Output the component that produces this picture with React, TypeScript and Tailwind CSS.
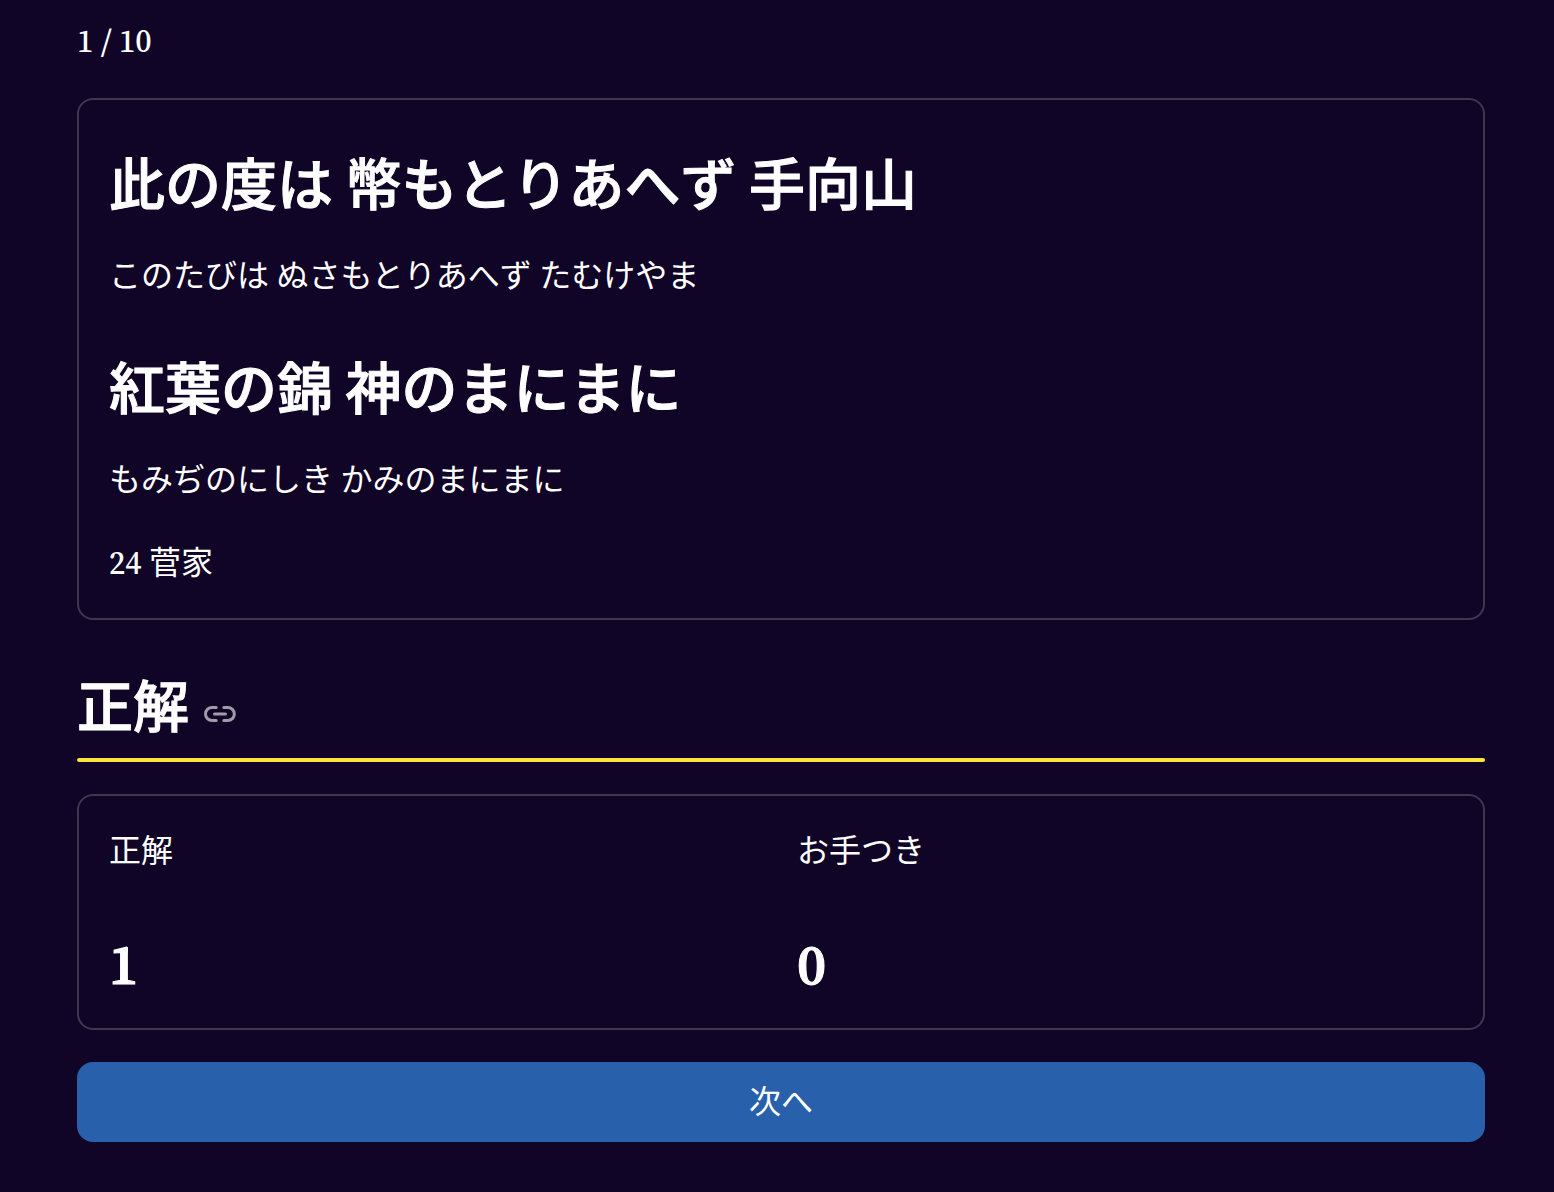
const verses = [
  { text: "此の度は 幣もとりあへず 手向山", reading: "このたびは ぬさもとりあへず たむけやま" },
  { text: "紅葉の錦 神のまにまに", reading: "もみぢのにしき かみのまにまに" },
];

const scores = [
  { label: "正解", value: 1 },
  { label: "お手つき", value: 0 },
];

function LinkIcon() {
  return (
    <svg
      width="32"
      height="32"
      viewBox="0 0 32 32"
      fill="none"
      stroke="currentColor"
      strokeWidth="3"
      strokeLinecap="round"
      aria-hidden="true"
    >
      <path d="M12.2 9.5H8a6.5 6.5 0 0 0 0 13h4.2M19.8 9.5h4a6.5 6.5 0 0 1 0 13h-4M10.5 16h11" />
    </svg>
  );
}

export default function App() {
  return (
    <main
      lang="ja"
      className='min-h-screen bg-[#100427] pt-4 pr-[69px] pb-[50px] pl-[77px] font-["Source_Serif_4","Noto_Serif","Liberation_Serif","Noto_Sans_CJK_JP",serif] text-[32px] leading-[51px] text-white'
    >
      <p className="font-medium">1 / 10</p>

      <section className="mt-[31px] rounded-2xl border-2 border-[#403650] px-[30px] pt-[50px] pb-[29px]">
        {verses.map((verse) => (
          <div key={verse.text} className="mb-[52px] last-of-type:mb-8">
            <h2 className='mb-10 font-["Noto_Sans_CJK_JP",sans-serif] text-[56px] leading-[61px] font-medium [-webkit-text-stroke:1px_white]'>
              {verse.text}
            </h2>
            <p>{verse.reading}</p>
          </div>
        ))}
        <p>
          <span className="font-medium">24</span> 菅家
        </p>
      </section>

      <h2
        id="answer"
        className='mt-[52px] flex items-center gap-[15px] pb-[25px] font-["Noto_Sans_CJK_JP",sans-serif] text-[56px] leading-[61px] font-medium [-webkit-text-stroke:1px_white]'
      >
        正解
        <a href="#answer" aria-label="正解へのリンク" className="pt-[22px] text-[#9f9ba8]">
          <LinkIcon />
        </a>
      </h2>
      <div className="h-1 rounded-sm bg-[#fbe340]" />

      <dl className="mt-8 grid grid-cols-2 gap-x-8 rounded-2xl border-2 border-[#403650] px-[30px] pt-[30px] pb-[27px]">
        {scores.map((score) => (
          <div key={score.label}>
            <dt>{score.label}</dt>
            <dd className="mt-[51px] text-[56px] leading-[73px] font-semibold [-webkit-text-stroke:1px_white]">{score.value}</dd>
          </div>
        ))}
      </dl>

      <button type="button" className="mt-8 block h-20 w-full rounded-2xl bg-[#2860ac]">
        次へ
      </button>
    </main>
  );
}
